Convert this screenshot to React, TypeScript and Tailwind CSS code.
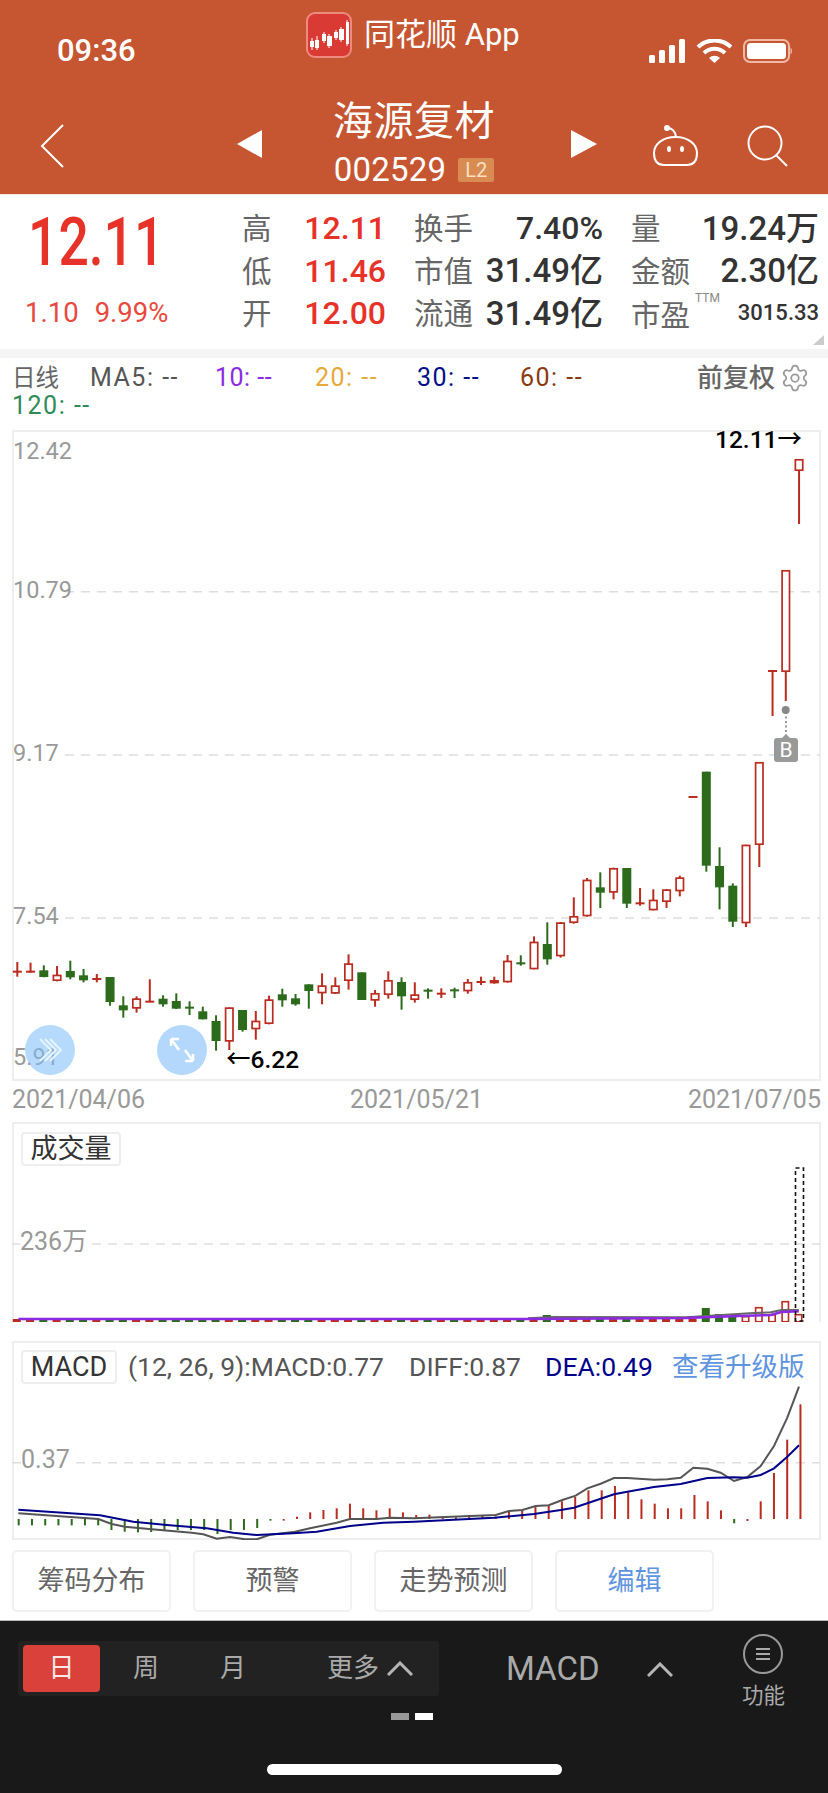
import React from "react";
import { Settings } from "lucide-react";

type C = [number, number, number, number, "r" | "g"];
const RED = "#b92c20";
const GRN = "#2c6a1c";
const z3: C[] = [
  [186,230,212,218,"r"],[188,218,212,216,"r"],[196,232,211,231,"g"],[198,244,224,243,"r"],[182,238,213,232,"g"],
  [207,247,226,241,"g"],[222,247,234,238,"r"],[231,317,231,306,"g"],[289,353,316,331,"g"],[289,338,295,326,"r"],
  [238,306,302,306,"r"],[286,320,296,313,"g"],[280,327,303,326,"g"],[304,345,320,326,"g"],[320,358,334,358,"g"],
  [346,452,363,423,"g"],[322,450,322,425,"r"],[330,395,330,390,"g"],[333,419,362,388,"r"],[287,373,298,372,"r"],
  [266,320,283,301,"g"],[282,317,295,313,"g"],[253,326,253,273,"g"],[220,313,256,280,"r"],[232,282,256,281,"r"],
  [163,269,190,243,"r"],[217,300,217,300,"g"],[270,320,279,302,"r"],[214,296,240,285,"r"],[232,329,246,289,"g"],
  [247,308,283,300,"r"],
];
const z4: C[] = [
  [565,596,569,573,"g"],[565,594,578,582,"r"],[563,594,568,572,"g"],[537,581,546,574,"r"],[530,555,543,547,"r"],
  [530,551,540,550,"r"],[465,548,482,547,"r"],[466,497,487,491,"g"],[409,508,425,508,"r"],[367,494,432,478,"g"],
  [366,473,367,469,"r"],[292,371,348,369,"r"],[234,350,239,349,"r"],[217,324,262,278,"g"],[203,298,204,278,"r"],
  [204,324,204,311,"g"],[264,317,307,313,"r"],[268,331,299,331,"r"],[267,324,268,306,"r"],[227,289,232,274,"r"],
  [-9,-9,-9,-6,"r"],[-85,215,-85,197,"g"],[142,328,198,262,"g"],[250,381,257,365,"g"],[134,381,134,370,"r"],
];
// full-page y values
const full: [number, number, number, number, "r" | "g"][] = [
  ...z3.map(([a, b, c, d, e]) => [900 + a / 3, 900 + b / 3, 900 + c / 3, 900 + d / 3, e] as C),
  ...z4.map(([a, b, c, d, e]) => [800 + a / 3, 800 + b / 3, 800 + c / 3, 800 + d / 3, e] as C),
  [762, 867, 762, 845, "r"],
  [670, 716, 670, 672, "r"],
  [570, 701, 570, 672, "r"],
  [459, 524, 459, 471, "r"],
];
full[51] = [797, 797, 796, 798, "r"];
const cx = (n: number) => 17.3 + 13.25 * n;

const hist: [number, "r" | "g"][] = [
  [556,"g"],[556,"g"],[556,"g"],[556,"g"],[556,"g"],[556,"g"],[556,"g"],[570,"g"],[575,"g"],[577,"g"],
  [576,"g"],[572,"g"],[570,"g"],[570,"g"],[570,"g"],[582,"g"],[570,"g"],[570,"g"],[564,"g"],[542,"g"],
  [542,"r"],[530,"r"],[517,"r"],[510,"r"],[505,"r"],[491,"r"],[505,"r"],[511,"r"],[505,"r"],[517,"r"],
  [525,"r"],[524,"r"],[532,"r"],[532,"r"],[525,"r"],[525,"r"],[530,"r"],[511,"r"],[512,"r"],[501,"r"],
  [498,"r"],[484,"r"],[471,"r"],[451,"r"],[451,"r"],[438,"r"],[457,"r"],[478,"r"],[491,"r"],[505,"r"],
  [505,"r"],[465,"r"],[484,"r"],[511,"r"],[550,"g"],[543,"r"],[484,"r"],[399,"r"],[299,"r"],[193,"r"],
];

const pts = (left: number[][], right: number[][]) =>
  [
    ...left.map(([x, y]) => `${(x / 3).toFixed(1)},${(1340 + y / 3).toFixed(1)}`),
    ...right.map(([x, y]) => `${(414 + x / 3).toFixed(1)},${(1340 + y / 3).toFixed(1)}`),
  ].join(" ");
const diff = pts(
  [[55,520],[295,537],[335,552],[375,560],[455,568],[575,578],[610,583],[650,596],[690,591],[735,598],[770,598],[810,584],[885,575],[930,565],[1010,548],[1050,537],[1130,537],[1170,533]],
  [[0,535],[245,525],[285,513],[325,510],[365,498],[404,496],[445,480],[485,467],[520,445],[560,431],[600,414],[640,414],[720,419],[760,418],[800,413],[838,383],[880,386],[920,398],[960,423],[1000,411],[1040,378],[1080,318],[1120,233],[1155,140]]
);
const dea = pts(
  [[55,509],[300,526],[400,545],[500,555],[620,565],[700,578],[770,585],[880,580],[950,575],[1050,558],[1150,548]],
  [[0,545],[240,533],[360,522],[440,510],[480,503],[520,490],[600,463],[640,455],[720,441],[800,432],[880,414],[960,412],[1000,413],[1040,405],[1080,385],[1120,350],[1155,316]]
);
const v = (a: number[][]) => a.map(([x, y]) => `${(x / 1.894).toFixed(1)},${(1110 + y / 3).toFixed(1)}`).join(" ");

const Dash = ({ y, x1 = 65 }: { y: number; x1?: number }) => (
  <line x1={x1} x2={820} y1={y} y2={y} stroke="#dedede" strokeWidth="1.5" strokeDasharray="9 7" />
);

function Candles() {
  return (
    <>
      {full.map(([hi, lo, top, bot, c], i) => {
        const x = cx(i);
        const col = c === "r" ? RED : GRN;
        const h = bot - top;
        return (
          <g key={i}>
            {lo > hi && <rect x={x - 1} y={hi} width="2" height={lo - hi} fill={col} />}
            {c === "g" || h < 3 ? (
              <rect x={x - 4.5} y={top} width="9" height={Math.max(h, 2)} fill={col} />
            ) : (
              <rect x={x - 3.7} y={top + 0.8} width="7.4" height={h - 1.6} fill="#fff" stroke={col} strokeWidth="1.7" />
            )}
          </g>
        );
      })}
    </>
  );
}

function Volumes() {
  const big: Record<number, number> = { 52: 14, 53: 8, 54: 6, 55: 6, 56: 15, 57: 8, 58: 21, 59: 8, 40: 7 };
  return (
    <>
      {full.map(([, , , , c], i) => {
        const x = cx(i) - 0.5;
        const col = c === "r" ? RED : GRN;
        const h = big[i] ?? 3;
        return h > 5 && c === "r" ? (
          <rect key={i} x={x - 3.2} y={1322 - h + 0.7} width="6.4" height={h - 1} fill="#fff" stroke={col} strokeWidth="1.6" />
        ) : (
          <rect key={i} x={x - 4} y={1322 - h} width="8" height={h} fill={col} />
        );
      })}
      <polyline points={v([[1000,625],[1050,621],[1300,622],[1420,610],[1460,607],[1480,600],[1513,600]])} fill="none" stroke="#666" strokeWidth="2" />
      <polyline points={v([[35,627],[1000,627],[1300,624],[1400,618],[1460,615],[1480,606],[1513,604]])} fill="none" stroke="#8a2be2" strokeWidth="2.5" />
      <rect x="795.5" y="1168" width="8" height="153" fill="none" stroke="#111" strokeWidth="1.6" strokeDasharray="4 3" />
    </>
  );
}

const PriceLabel = ({ t, cls }: { t: string; cls: string }) => (
  <span className={`absolute left-[-1px] text-[23.5px] leading-[28px] text-[#999] ${cls}`}>{t}</span>
);

const Cell = ({ l, val, cls, right }: { l: string; val: string; cls: string; right: string }) => (
  <div className={`flex items-center justify-between h-[42.5px] ${right}`}>
    <span className="text-[29.5px] text-[#666] leading-none mt-[3px]">{l}</span>
    <span className={`leading-none font-medium ${cls}`}>{val}</span>
  </div>
);

const Btn = ({ t, blue }: { t: string; blue?: boolean }) => (
  <div className={`w-[159px] h-[62px] flex items-center justify-center rounded-[5px] border-2 border-[#f1f1f1] text-[27px] ${blue ? "text-[#5f94df]" : "text-[#666]"}`}>
    {t}
  </div>
);

const Chevron = ({ cls }: { cls: string }) => (
  <svg className={cls} viewBox="0 0 26 15" fill="none" stroke="#b5b5b5" strokeWidth="3"><path d="M1 14 13 2 25 14" /></svg>
);

export default function App() {
  return (
    <div className="w-[828px] h-[1793px] bg-white overflow-hidden flex flex-col font-['Roboto','Noto_Sans_CJK_SC',sans-serif]">
      {/* header */}
      <header className="h-[195px] bg-[#c65532] text-white border-b border-[#f7e4dc] shrink-0">
        <div className="relative h-[70px] flex">
          <span className="absolute left-[57px] top-[32px] text-[31px] leading-[38px] font-medium">09:36</span>
          <div className="mx-auto ml-[306px] mt-[12px] flex">
            <svg width="46" height="46" viewBox="0 0 46 46">
              <rect x="1" y="1" width="44" height="44" rx="8" fill="#d93a34" stroke="#ee8a80" strokeWidth="2" />
              <path d="M6 26v12M11 24v14M18 20v11M23 22v14M30 18v10M35 15v15M41 8v26" stroke="#fff" strokeWidth="1" />
              <rect x="4" y="29" width="4" height="6" fill="#fff" />
              <rect x="9" y="28" width="4" height="8" fill="#fff" />
              <rect x="16" y="22" width="4" height="7" fill="#fff" />
              <rect x="21" y="24" width="5" height="10" fill="#fff" />
              <rect x="28" y="20" width="4" height="6" fill="#fff" />
              <rect x="33" y="17" width="5" height="11" fill="#fff" />
              <rect x="40" y="10" width="3" height="22" fill="#fff" />
            </svg>
            <span className="ml-[12px] text-[31px] leading-[46px]">同花顺 App</span>
          </div>
          <svg className="absolute left-[649px] top-[39px]" width="143" height="24" viewBox="0 0 143 24">
            <rect x="0" y="16" width="6" height="8" rx="1.5" fill="#fff" />
            <rect x="10" y="11" width="6" height="13" rx="1.5" fill="#fff" />
            <rect x="20" y="6" width="6" height="18" rx="1.5" fill="#fff" />
            <rect x="30" y="0" width="6" height="24" rx="1.5" fill="#fff" />
            <path d="M49 8a24 24 0 0 1 33 0" stroke="#fff" strokeWidth="4" fill="none" />
            <path d="M55 14a15 15 0 0 1 21 0" stroke="#fff" strokeWidth="4" fill="none" />
            <path d="M60 19a8 8 0 0 1 11 0l-5.5 5z" fill="#fff" />
            <rect x="95" y="1" width="45" height="22" rx="6" stroke="#f0b9a5" strokeWidth="2" fill="none" />
            <rect x="98" y="4" width="39" height="16" rx="3.5" fill="#fff" />
            <path d="M141.500 8.500c2 1 2 6 0 7z" fill="#f0b9a5" />
          </svg>
        </div>
        <div className="relative h-[124px] flex justify-center">
          <svg className="absolute left-[40px] top-[54px]" width="24" height="44" viewBox="0 0 24 44" fill="none" stroke="#fff" strokeWidth="2"><path d="M23 1 2 22l21 21" /></svg>
          <svg className="absolute left-[237px] top-[60px]" width="25" height="28" viewBox="0 0 25 28"><path d="M25 0v28L0 14z" fill="#fff" /></svg>
          <div className="flex flex-col items-center">
            <span className="text-[40px] leading-[46px] mt-[29px] tracking-[0.5px]">海源复材</span>
            <div className="flex items-center mt-[6px]">
              <span className="text-[33px] leading-[38px] tracking-[0.2px]">002529</span>
              <span className="ml-[12px] w-[36px] h-[24px] bg-[#d98c52] rounded-[2px] text-[#f9dfc2] text-[20px] leading-[24px] text-center">L2</span>
            </div>
          </div>
          <svg className="absolute left-[571px] top-[60px]" width="26" height="28" viewBox="0 0 26 28"><path d="M0 0v28l26-14z" fill="#fff" /></svg>
          <svg className="absolute left-[652px] top-[55px]" width="47" height="42" viewBox="0 0 47 42" fill="none" stroke="#fff" strokeWidth="2">
            <path d="M15 3c4 0 8 2 9 9" />
            <circle cx="15" cy="3" r="2" fill="#fff" />
            <path d="M2 28c0-9 9-16 21.500-16S45 19 45 28c0 8-3 12-10 12H12C5 40 2 36 2 28z" />
            <ellipse cx="17" cy="24" rx="2" ry="3" fill="#fff" stroke="none" />
            <ellipse cx="30" cy="24" rx="2" ry="3" fill="#fff" stroke="none" />
          </svg>
          <svg className="absolute left-[747px] top-[55px]" width="42" height="42" viewBox="0 0 42 42" fill="none" stroke="#fff" strokeWidth="2">
            <circle cx="18" cy="18" r="16.500" /><path d="M29 30l11 11" />
          </svg>
        </div>
      </header>

      {/* quote */}
      <section className="h-[154px] flex shrink-0 relative">
        <div className="w-[195px] pl-[25px] pt-[12px]">
          <div className="text-[66px] leading-[72px] font-medium text-[#e63228] ml-[3px] origin-left scale-x-[0.81]">12.11</div>
          <div className="mt-[18px] text-[27.5px] leading-[32px] text-[#e8483e]">
            <span>1.10</span><span className="ml-[16px]">9.99%</span>
          </div>
        </div>
        <div className="ml-[47px] pt-[12px] grid grid-cols-[172px_217px_188px] content-start">
          <Cell l="高" val="12.11" cls="text-[32px] text-[#e63228]" right="pr-[28px]" />
          <Cell l="换手" val="7.40%" cls="text-[32px] text-[#333]" right="pr-[28px]" />
          <Cell l="量" val="19.24万" cls="text-[33px] text-[#333]" right="" />
          <Cell l="低" val="11.46" cls="text-[32px] text-[#e63228]" right="pr-[28px]" />
          <Cell l="市值" val="31.49亿" cls="text-[33px] text-[#333]" right="pr-[28px]" />
          <Cell l="金额" val="2.30亿" cls="text-[33px] text-[#333]" right="" />
          <Cell l="开" val="12.00" cls="text-[32px] text-[#e63228]" right="pr-[28px]" />
          <Cell l="流通" val="31.49亿" cls="text-[33px] text-[#333]" right="pr-[28px]" />
          <div className="flex items-center h-[42.5px]">
            <span className="text-[29.5px] text-[#666] leading-none mt-[6px]">市盈</span>
            <span className="text-[12px] text-[#888] leading-none ml-[5px] self-start">TTM</span>
            <span className="ml-auto text-[22px] text-[#333] leading-none font-medium">3015.33</span>
          </div>
        </div>
        <svg className="absolute left-[813px] top-[140px]" width="11" height="10" viewBox="0 0 11 10"><path d="M11 0v10H0z" fill="#ccc" /></svg>
      </section>
      <div className="h-[9px] bg-[#f5f5f5] shrink-0" />

      {/* legend */}
      <section className="h-[72px] shrink-0 pl-[12px] pt-[6px] text-[25px] leading-[28px]">
        <div className="flex items-center h-[28px]">
          <span className="w-[78px] text-[#666] text-[23.5px]">日线</span>
          <span className="w-[125px] text-[#555] tracking-[1.5px]">MA5: --</span>
          <span className="w-[100px] text-[#8a2be2] tracking-[0.5px]">10: --</span>
          <span className="w-[102px] text-[#e8a83c] tracking-[1.5px]">20: --</span>
          <span className="w-[103px] text-[#000f8a] tracking-[1.5px]">30: --</span>
          <span className="w-[177px] text-[#8b3a10] tracking-[1.5px]">60: --</span>
          <span className="text-[26px] font-medium text-[#666]">前复权</span>
          <Settings className="ml-[5px]" size={30} color="#999" strokeWidth={1.4} />
        </div>
        <div className="h-[28px] text-[#2e8b57] tracking-[1.5px]">120: --</div>
      </section>

      {/* candle chart */}
      <section className="relative ml-[12px] w-[809px] h-[651px] border-2 border-[#eee] shrink-0">
        <svg className="absolute -left-[2px] -top-[2px]" width="809" height="651" viewBox="12 430 809 651">
          <Dash y={591.7} />
          <Dash y={755} />
          <Dash y={918} />
          <Candles />
          <path d="M786 712V736" stroke="#999" strokeWidth="2" strokeDasharray="2 2.500" />
          <circle cx="785.700" cy="710" r="4" fill="#888" />
          <path d="M782 738l4-4 4 4z" fill="#999" />
        </svg>
        <PriceLabel t="12.42" cls="top-[5px]" />
        <PriceLabel t="10.79" cls="top-[144px]" />
        <PriceLabel t="9.17" cls="top-[307px]" />
        <PriceLabel t="7.54" cls="top-[470px]" />
        <PriceLabel t="5.91" cls="top-[611px]" />
        <span className="absolute left-[701px] top-[-7px] text-[24.5px] leading-[30px] font-medium text-black whitespace-nowrap">12.11→</span>
        <span className="absolute left-[212px] top-[613px] text-[24.5px] leading-[30px] font-medium text-black whitespace-nowrap">←6.22</span>
        <span className="absolute left-[760px] top-[306px] w-[24px] h-[24px] rounded-[3px] bg-[#999] text-white text-[21px] leading-[24px] text-center">B</span>
        <div className="absolute left-[11px] top-[593px] w-[50px] h-[50px] rounded-full bg-[#78bcfa]/55 flex items-center justify-center">
          <svg width="24" height="26" viewBox="0 0 24 26" fill="none" stroke="#e8f4ff" strokeWidth="1.8"><path d="M2 2l11 11L2 24M7 2l11 11L7 24M12 2l11 11-11 11" /></svg>
        </div>
        <div className="absolute left-[143px] top-[593px] w-[50px] h-[50px] rounded-full bg-[#b3d8fb] flex items-center justify-center">
          <svg width="28" height="28" viewBox="0 0 28 28" fill="none" stroke="#fff" strokeWidth="2.500"><path d="M3 3l8 11M3 3v7M3 3h8M25 25l-8-11M25 25v-7M25 25h-8" /></svg>
        </div>
      </section>

      {/* dates */}
      <div className="h-[41px] shrink-0 pl-[12px] w-[821px] flex items-start justify-between text-[25px] leading-[34px] text-[#999] pt-[2px]">
        <span>2021/04/06</span><span>2021/05/21</span><span>2021/07/05</span>
      </div>

      {/* volume */}
      <section className="relative ml-[12px] w-[809px] h-[200px] border-2 border-b-0 border-[#eee] shrink-0">
        <svg className="absolute -left-[2px] -top-[2px]" width="809" height="200" viewBox="12 1122 809 200">
          <Dash y={1244} x1={12} />
          <Volumes />
        </svg>
        <span className="absolute left-[7px] top-[8px] w-[100px] h-[34px] rounded-[4px] border-2 border-[#eee] bg-white text-[27px] leading-[30px] text-center text-[#333]">成交量</span>
        <span className="absolute left-[6px] top-[103px] bg-white pr-[2px] text-[25px] leading-[30px] text-[#999]">236万</span>
      </section>
      <div className="h-[19px] shrink-0" />

      {/* macd */}
      <section className="relative ml-[12px] w-[809px] h-[199px] border-2 border-[#eee] shrink-0">
        <svg className="absolute -left-[2px] -top-[2px]" width="809" height="199" viewBox="12 1341 809 199">
          <Dash y={1462.700} x1={12} />
          {hist.map(([z, c], i) => {
            const y0 = 1340 + 537 / 3;
            const y1 = 1340 + z / 3;
            return <rect key={i} x={17.7 + 13.25 * i} y={Math.min(y0, y1)} width="2" height={Math.abs(y1 - y0)} fill={c === "r" ? RED : GRN} />;
          })}
          <polyline points={diff} fill="none" stroke="#555" strokeWidth="2" />
          <polyline points={dea} fill="none" stroke="#00008b" strokeWidth="2" />
        </svg>
        <div className="relative flex items-center pt-[7px] pl-[7px] text-[26.5px] leading-[34px] text-[#555]">
          <span className="w-[96px] h-[34px] rounded-[4px] border-2 border-[#eee] bg-white text-center leading-[30px] text-[27px] text-[#333]">MACD</span>
          <span className="ml-[11px] w-[281px] whitespace-nowrap">(12, 26, 9):MACD:0.77</span>
          <span className="w-[136px] whitespace-nowrap">DIFF:0.87</span>
          <span className="w-[127px] text-[#00008b] whitespace-nowrap">DEA:0.49</span>
          <span className="text-[26.500px] text-[#5f94df] whitespace-nowrap">查看升级版</span>
        </div>
        <span className="absolute left-[7px] top-[102px] bg-white text-[25px] leading-[30px] text-[#999] pr-[1px]">0.37</span>
      </section>

      {/* buttons */}
      <div className="mt-[10px] ml-[12px] flex gap-[22px] shrink-0">
        <Btn t="筹码分布" /><Btn t="预警" /><Btn t="走势预测" /><Btn t="编辑" blue />
      </div>

      {/* bottom bar */}
      <footer className="relative mt-[8px] flex-1 bg-[#191919] border-t border-[#bbb]">
        <div className="absolute left-[18px] top-[20px] w-[421px] h-[55px] bg-[#222] rounded-[3px] flex items-center pl-[5px] text-[26px] text-[#aaa]">
          <span className="w-[77px] h-[47px] rounded-[4px] bg-[#d9413a] text-[#f8e8e6] leading-[47px] text-center">日</span>
          <span className="w-[92px] text-center">周</span>
          <span className="w-[82px] text-center">月</span>
          <span className="ml-[53px]">更多</span>
          <Chevron cls="w-[26px] h-[15px] ml-[8px]" />
        </div>
        <span className="absolute left-[506px] top-[27px] text-[33px] leading-[42px] text-[#aaa]">MACD</span>
        <Chevron cls="absolute left-[647px] top-[41px] w-[26px] h-[15px]" />
        <div className="absolute left-[743px] top-[13px] w-[40px] h-[40px] rounded-full border-2 border-[#999] flex flex-col items-center justify-center gap-[3px]">
          <i className="block w-[14px] h-[2px] bg-[#aaa]" /><i className="block w-[14px] h-[2px] bg-[#aaa]" /><i className="block w-[14px] h-[2px] bg-[#aaa]" />
        </div>
        <span className="absolute left-[742px] top-[60px] text-[21.500px] leading-[30px] text-[#aaa]">功能</span>
        <div className="absolute left-[391px] top-[92px] flex gap-[6px]">
          <i className="block w-[18px] h-[7px] bg-[#999]" /><i className="block w-[18px] h-[7px] bg-white" />
        </div>
        <div className="absolute left-[267px] top-[143px] w-[295px] h-[11px] rounded-full bg-white" />
      </footer>
    </div>
  );
}
